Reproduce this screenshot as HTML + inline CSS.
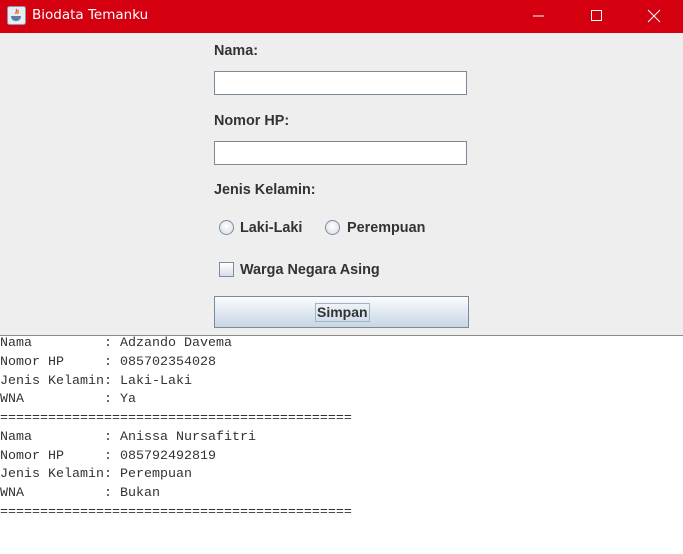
<!DOCTYPE html>
<html><head><style>
body{margin:0;width:683px;height:554px;background:#fff;position:relative;overflow:hidden;font-family:"Liberation Sans",Arial,sans-serif}
.tb{position:absolute;left:0;top:0;width:683px;height:33px;background:#d4000f;color:#fff}
.tb .t{position:absolute;left:32px;top:7px;font-family:"DejaVu Sans","Liberation Sans",sans-serif;font-size:13.5px}
.panel{position:absolute;left:0;top:33px;width:683px;height:302px;background:#eeeeee;border-bottom:1px solid #8a8a8a}
.l{position:absolute;left:214px;font-weight:bold;font-size:14.4px;color:#333}
.f{position:absolute;left:214px;width:251px;height:22px;background:#fff;border:1px solid #7a8a99}
.r{position:absolute;width:13px;height:13px;border-radius:50%;border:1px solid #7d8c9c;background:radial-gradient(circle at 50% 40%,#fff,#d2dbe6)}
.c{position:absolute;width:13px;height:13px;border:1px solid #7d8c9c;background:linear-gradient(#fff,#d5dee8)}
.btn{position:absolute;left:214px;top:296px;width:253px;height:30px;border:1px solid #7a8a99;background:linear-gradient(#fbfcfd,#dbe5ef 60%,#c8d6e4)}
.btn span{position:absolute;left:100px;top:6px;border:1px solid #a0b4c8;padding:0 1px;font-weight:bold;font-size:14px;color:#333;line-height:17px}
pre{position:absolute;left:0;top:335px;margin:0;font-family:"Liberation Mono",monospace;font-size:13.33px;line-height:18.75px;color:#333}
</style></head><body>
<div class="tb">
<svg style="position:absolute;left:7px;top:6px" width="19" height="19"><rect x="0.5" y="0.5" width="18" height="18" rx="2" fill="#e8ecf2" stroke="#8899aa"/><path d="M9 3c2 2-1 3 0 5M11 4c1 2-1 3 0 4" stroke="#e06a1a" fill="none" stroke-width="1.3"/><path d="M4 10h10c0 3-2 5-5 5s-5-2-5-5z" fill="#5a7ea8"/></svg>
<div class="t">Biodata Temanku</div>
<svg style="position:absolute;left:530px;top:9px" width="140" height="14"><path d="M3 7h11" stroke="#fff"/><rect x="61.5" y="1.5" width="10" height="10" fill="none" stroke="#fff"/><path d="M118 1l12 12M130 1l-12 12" stroke="#fff"/></svg>
</div>
<div class="panel"></div>
<div class="l" style="top:43px">Nama:</div>
<div class="f" style="top:71px"></div>
<div class="l" style="top:113px">Nomor HP:</div>
<div class="f" style="top:141px"></div>
<div class="l" style="top:182px">Jenis Kelamin:</div>
<div class="r" style="left:219px;top:220px"></div>
<div class="l" style="left:240px;top:220px">Laki-Laki</div>
<div class="r" style="left:325px;top:220px"></div>
<div class="l" style="left:347px;top:220px">Perempuan</div>
<div class="c" style="left:219px;top:262px"></div>
<div class="l" style="left:240px;top:262px">Warga Negara Asing</div>
<div class="btn"><span>Simpan</span></div>
<pre>Nama         : Adzando Davema
Nomor HP     : 085702354028
Jenis Kelamin: Laki-Laki
WNA          : Ya
============================================
Nama         : Anissa Nursafitri
Nomor HP     : 085792492819
Jenis Kelamin: Perempuan
WNA          : Bukan
============================================</pre>
</body></html>
